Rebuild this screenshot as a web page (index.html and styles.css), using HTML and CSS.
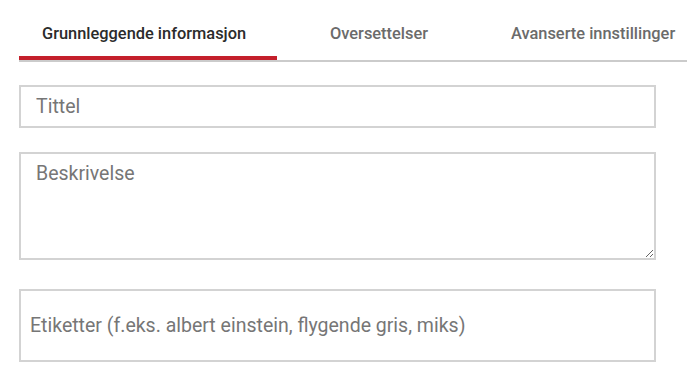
FILE: index.html
```html
<!DOCTYPE html>
<html lang="no">
<head>
<meta charset="utf-8">
<title>Grunnleggende informasjon</title>
<link rel="stylesheet" href="styles.css">
</head>
<body>
<div class="page">
  <nav class="tabs">
    <div class="tab tab-active">Grunnleggende informasjon</div>
    <div class="tab tab-2">Oversettelser</div>
    <div class="tab tab-3">Avanserte innstillinger</div>
  </nav>
  <form class="form">
    <input class="field field-title" type="text" placeholder="Tittel">
    <textarea class="field field-desc" placeholder="Beskrivelse"></textarea>
    <input class="field field-tags" type="text" placeholder="Etiketter (f.eks. albert einstein, flygende gris, miks)">
  </form>
</div>
</body>
</html>
```
FILE: styles.css
```css
html, body {
  margin: 0;
  padding: 0;
  background: #ffffff;
}
body {
  font-family: Roboto, "Liberation Sans", sans-serif;
  overflow: hidden;
}
.page {
  padding-left: 19px;
}
.tabs {
  display: flex;
  border-bottom: 2px solid #cbcbcb;
  box-sizing: border-box;
  height: 62px;
  white-space: nowrap;
  overflow: hidden;
}
.tab {
  flex-shrink: 0;
  box-sizing: border-box;
  height: 61px;
  padding: 23px 23px 0;
  font-size: 16.4px;
  line-height: 21px;
  font-weight: 500;
  color: #6b6b6b;
}
.tab-active {
  color: #2b2b2b;
  border-bottom: 5px solid #c4202b;
  width: 258px;
  padding-left: 23px;
  padding-right: 0;
}
.tab-2 {
  margin-left: 30px;
}
.tab-3 {
  margin-left: 37px;
}
.form {
  display: flex;
  flex-direction: column;
  width: 637px;
  padding-top: 23px;
}
.field {
  box-sizing: border-box;
  margin: 0;
  border: 2px solid #d3d3d3;
  border-radius: 0;
  background: #fff;
  font-family: Roboto, "Liberation Sans", sans-serif;
  font-size: 19.5px;
  color: #333;
  outline: none;
}
.field::placeholder {
  color: #767676;
  opacity: 1;
}
.field-title {
  height: 43px;
  padding: 0 15px;
}
.field-desc {
  height: 108px;
  margin-top: 24px;
  padding: 8px 15px;
  resize: vertical;
  line-height: 24px;
}
.field-tags {
  height: 73px;
  margin-top: 29px;
  padding: 0 9px;
}
```
